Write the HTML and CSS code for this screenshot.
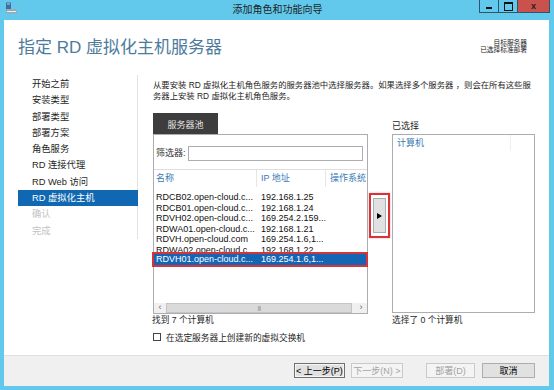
FILE: index.html
```html
<!DOCTYPE html>
<html lang="zh-CN">
<head>
<meta charset="UTF-8">
<meta name="viewport" content="width=device-width, initial-scale=1.0">
<title>添加角色和功能向导</title>
<link rel="stylesheet" href="styles.css">
</head>
<body>
<div class="window">
    <div class="titlebar">
        <svg class="app-icon" width="13" height="13" viewBox="0 0 13 13">
            <rect x="1" y="0.5" width="5" height="7" fill="#3f6f9f"/>
            <rect x="2" y="1.5" width="3" height="1" fill="#bcd4ea"/>
            <path d="M2 7 L11 7 L12.5 11.5 L0.5 11.5 Z" fill="#9aa9b6"/>
            <rect x="2" y="9" width="9" height="1" fill="#e8eef2"/>
        </svg>
        <div class="title">添加角色和功能向导</div>
        <div class="controls">
            <span class="ctl ctl-min"></span>
            <span class="ctl ctl-max"></span>
            <span class="ctl ctl-close">x</span>
        </div>
    </div>

    <div class="client">
        <div class="header">
            <h1>指定 RD 虚拟化主机服务器</h1>
            <div class="target">
                <div>目标服务器</div>
                <div>已选择标准部署</div>
            </div>
        </div>

        <div class="body">
            <ul class="nav">
                <li>开始之前</li>
                <li>安装类型</li>
                <li>部署类型</li>
                <li>部署方案</li>
                <li>角色服务</li>
                <li>RD 连接代理</li>
                <li>RD Web 访问</li>
                <li class="active">RD 虚拟化主机</li>
                <li class="disabled">确认</li>
                <li class="disabled">完成</li>
            </ul>

            <div class="main">
                <p class="desc">从要安装 RD 虚拟化主机角色服务的服务器池中选择服务器。如果选择多个服务器 ，则会在所有这些服<br>务器上安装 RD 虚拟化主机角色服务。</p>

                <div class="pool-row">
                    <!-- 服务器池 -->
                    <div class="pool-col">
                        <div class="tab">服务器池</div>
                        <div class="panel">
                            <div class="filter">
                                <label for="filter">筛选器:</label>
                                <input type="text" id="filter">
                            </div>
                            <div class="list-head">
                                <span class="c-name">名称</span>
                                <span class="c-ip">IP 地址</span>
                                <span class="c-os">操作系统</span>
                            </div>
                            <div class="rows">
                                <div class="row"><span class="c-name">RDCB02.open-cloud.c...</span><span class="c-ip">192.168.1.25</span></div>
                                <div class="row"><span class="c-name">RDCB01.open-cloud.c...</span><span class="c-ip">192.168.1.24</span></div>
                                <div class="row"><span class="c-name">RDVH02.open-cloud.c...</span><span class="c-ip">169.254.2.159...</span></div>
                                <div class="row"><span class="c-name">RDWA01.open-cloud.c...</span><span class="c-ip">192.168.1.21</span></div>
                                <div class="row"><span class="c-name">RDVH.open-cloud.com</span><span class="c-ip">169.254.1.6,1...</span></div>
                                <div class="row"><span class="c-name">RDWA02.open-cloud.c...</span><span class="c-ip">192.168.1.22</span></div>
                                <div class="row selected"><span class="c-name">RDVH01.open-cloud.c...</span><span class="c-ip">169.254.1.6,1...</span></div>
                            </div>
                            <div class="hscroll">
                                <span class="sb-btn">&lsaquo;</span>
                                <span class="sb-track"><span class="sb-thumb">|||</span></span>
                                <span class="sb-btn">&rsaquo;</span>
                            </div>
                        </div>
                        <div class="count">找到 7 个计算机</div>
                        <label class="check"><span class="box"></span>在选定服务器上创建新的虚拟交换机</label>
                    </div>

                    <!-- 添加按钮 -->
                    <div class="add-col">
                        <div class="add-frame">
                            <button class="add-btn"><span class="arrow"></span></button>
                        </div>
                    </div>

                    <!-- 已选择 -->
                    <div class="sel-col">
                        <div class="sel-label">已选择</div>
                        <div class="sel-box">
                            <div class="sel-head"><span class="sel-name">计算机</span><span></span></div>
                        </div>
                        <div class="count">选择了 0 个计算机</div>
                    </div>
                </div>
            </div>
        </div>

        <div class="footer">
            <button class="btn btn-default">&lt; 上一步(P)</button>
            <button class="btn btn-next" disabled>下一步(N) &gt;</button>
            <button class="btn btn-deploy" disabled>部署(D)</button>
            <button class="btn btn-cancel">取消</button>
        </div>
    </div>
</div>
</body>
</html>
```

FILE: styles.css
```css
* {
    box-sizing: border-box;
}

body {
    margin: 0;
    font-family: "Liberation Sans", "Noto Sans CJK SC", sans-serif;
    color: #1e1e1e;
    background: #62c9ec;
}

.window {
    width: 554px;
    height: 390px;
    padding: 0 5px 4px 4px;
    background: #62c9ec;
}

/* title bar */
.titlebar {
    height: 20px;
    display: grid;
    grid-template-columns: 1fr auto 1fr;
    align-items: start;
    margin: 0 -1px 0 1px;
}

.app-icon {
    margin-top: 2px;
    display: block;
}

.title {
    font-size: 10px;
    line-height: 19px;
    color: #1e1e1e;
}

.controls {
    display: flex;
    justify-self: end;
    border: 1px solid #2f5569;
    border-top: none;
    height: 13px;
}

.ctl {
    width: 19px;
    height: 12px;
    display: flex;
    align-items: center;
    justify-content: center;
    border-right: 1px solid #2f5569;
    position: relative;
}

.ctl-min::before {
    content: "";
    width: 6px;
    height: 2px;
    margin-top: 4px;
    background: #111;
}

.ctl-max::before {
    content: "";
    width: 7px;
    height: 6px;
    border: 1px solid #111;
    border-top-width: 2px;
}

.ctl-close {
    width: 31px;
    border-right: none;
    background: #c9524c;
    color: #222;
    font-size: 9px;
    font-weight: bold;
    line-height: 12px;
}

/* client area */
.client {
    height: 366px;
    background: #fff;
    display: flex;
    flex-direction: column;
}

.header {
    height: 50px;
    display: flex;
    justify-content: space-between;
}

.header h1 {
    margin: 0;
    padding: 18px 0 0 14px;
    font-size: 17px;
    line-height: 20px;
    font-weight: normal;
    color: #4d7b9b;
}

.target {
    padding: 20px 22px 0 0;
    text-align: right;
    font-size: 6.7px;
    line-height: 6.5px;
    color: #222;
    white-space: nowrap;
}

.body {
    height: 285px;
    display: flex;
    align-items: flex-start;
}

.nav {
    list-style: none;
    margin: 5px 0 0 14px;
    padding: 1px 0 0 0;
    width: 120px;
    border-right: 1px solid #e3e3e3;
    font-size: 9.3px;
}

.nav li {
    height: 16.3px;
    line-height: 16.3px;
    padding-left: 14px;
    margin-right: -1px;
}

.nav li.active {
    background: #1068b2;
    color: #fff;
}

.nav li.disabled {
    color: #c3c3c3;
}

.main {
    margin-left: 15px;
    width: 382px;
}

.desc {
    margin: 0;
    padding-top: 10px;
    font-size: 8.35px;
    line-height: 11px;
    white-space: nowrap;
}

.pool-row {
    margin-top: 11px;
    display: flex;
}

.pool-col {
    width: 215px;
}

.tab {
    width: 65px;
    height: 21px;
    padding-top: 4px;
    line-height: 17px;
    background: #3d3d3d;
    color: #e4e4e4;
    font-size: 9px;
    text-align: center;
}

.panel {
    height: 180px;
    border: 1px solid #abadb3;
    display: flex;
    flex-direction: column;
    font-size: 9px;
}

.filter {
    height: 34px;
    padding: 11px 4px 0 2px;
    display: flex;
    align-items: flex-start;
}

.filter label {
    flex: 1;
    line-height: 15px;
    color: #333;
}

.filter input {
    width: 175px;
    height: 15px;
    border: 1px solid #abadb3;
    padding: 0;
}

.list-head {
    height: 18px;
    display: flex;
    border-top: 1px solid #dedede;
    line-height: 17px;
    color: #3c78b4;
}

.c-name {
    width: 103px;
    padding-left: 2px;
    flex-shrink: 0;
}

.c-ip {
    width: 69px;
    padding-left: 4px;
    flex-shrink: 0;
}

.c-os {
    padding-left: 4px;
}

.list-head .c-name,
.list-head .c-ip {
    border-right: 1px solid #e6e6e6;
}

.rows {
    flex: 1;
    padding-top: 5px;
}

.row {
    display: flex;
    height: 10.5px;
    line-height: 10.5px;
    white-space: nowrap;
    color: #111;
}

.row.selected {
    position: relative;
    height: 15px;
    line-height: 11px;
    margin: -2.75px -1px 0 -2px;
    border: 2px solid #d6333a;
    background: #1565b5;
    color: #fff;
}

.hscroll {
    height: 10px;
    display: flex;
    background: #f0f0f0;
    font-size: 9px;
    line-height: 9px;
    color: #666;
}

.sb-btn {
    width: 12px;
    text-align: center;
}

.sb-track {
    flex: 1;
    padding-right: 3px;
}

.sb-thumb {
    display: block;
    height: 10px;
    background: #dadada;
    border: 1px solid #c4c4c4;
    text-align: center;
    font-size: 6px;
    line-height: 8px;
    letter-spacing: -0.5px;
    color: #888;
}

.count {
    margin-left: -1px;
    font-size: 8.7px;
    line-height: 12px;
}

.check {
    display: flex;
    align-items: center;
    margin-top: 5px;
    height: 12px;
    font-size: 8.7px;
}

.check .box {
    width: 8px;
    height: 8px;
    border: 1px solid #444;
    background: #fff;
    margin-right: 5px;
}

.add-col {
    width: 24px;
}

.add-frame {
    width: 21px;
    height: 45px;
    margin: 80px 0 0 1px;
    padding: 3px 2px;
    border: 2px solid #d6333a;
    box-shadow: 0 0 2px rgba(200, 40, 40, 0.35);
}

.add-btn {
    width: 13px;
    height: 35px;
    padding: 0;
    background: #e1e1e1;
    border: 1px solid #adadad;
    display: flex;
    align-items: center;
    justify-content: center;
}

.arrow {
    width: 0;
    height: 0;
    border-left: 5px solid #000;
    border-top: 3px solid transparent;
    border-bottom: 3px solid transparent;
}

.sel-col {
    width: 143px;
}

.sel-label {
    height: 21px;
    padding-top: 5px;
    line-height: 16px;
    font-size: 9px;
}

.sel-box {
    height: 179px;
    border: 1px solid #abadb3;
}

.sel-head {
    display: flex;
    height: 16px;
    line-height: 16px;
    font-size: 9px;
    color: #3c78b4;
}

.sel-name {
    width: 118px;
    padding-left: 4px;
    border-right: 1px solid #efefef;
}

.sel-col .count {
    margin: 1px 0 0 0;
}

/* footer */
.footer {
    flex: 1;
    display: flex;
    justify-content: flex-end;
    padding: 7px 14px 0 0;
    border-top: 1px solid #dfdfdf;
    background: #f0f0f0;
}

.btn {
    height: 15px;
    padding: 0;
    font-family: "Liberation Sans", "Noto Sans CJK SC", sans-serif;
    font-size: 9px;
    line-height: 12px;
    background: #e1e1e1;
    border: 1px solid #adadad;
    color: #000;
}

.btn-default {
    width: 51px;
    border-color: #707070;
    box-shadow: inset 0 0 0 1px #f6f6f6;
}

.btn-next {
    width: 52px;
    margin-left: 6px;
}

.btn-deploy {
    width: 49px;
    margin-left: 23px;
}

.btn-cancel {
    width: 53px;
    margin-left: 7px;
}

.btn:disabled {
    background: #f4f4f4;
    border-color: #cacaca;
    color: #a3a3a3;
}
```
